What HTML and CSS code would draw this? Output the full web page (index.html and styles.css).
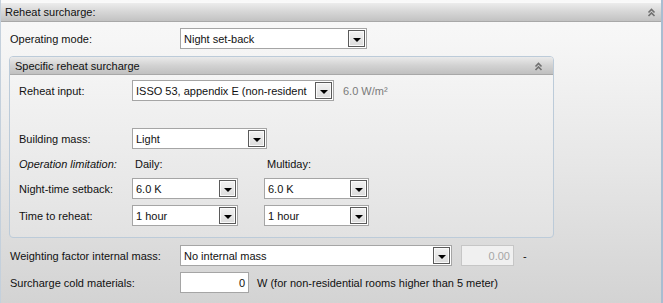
FILE: index.html
```html
<!DOCTYPE html>
<html>
<head>
<meta charset="utf-8">
<link rel="stylesheet" href="styles.css">
</head>
<body>
<div class="page">
  <div class="hdr">
    <span>Reheat surcharge:</span>
    <svg class="chev" width="9" height="9" viewBox="0 0 9 9"><polyline points="1.5,4.5 4.5,1.5 7.5,4.5" fill="none" stroke="#707070" stroke-width="1.6"/><polyline points="1.5,8 4.5,5 7.5,8" fill="none" stroke="#707070" stroke-width="1.6"/></svg>
  </div>

  <div class="row r-op">
    <div class="lbl w170">Operating mode:</div>
    <div class="sel w186"><span class="val">Night set-back</span><span class="btn"><i></i></span></div>
  </div>

  <div class="group">
    <div class="ghdr">
      <span>Specific reheat surcharge</span>
      <svg class="chev" width="9" height="9" viewBox="0 0 9 9"><polyline points="1.5,4.5 4.5,1.5 7.5,4.5" fill="none" stroke="#707070" stroke-width="1.6"/><polyline points="1.5,8 4.5,5 7.5,8" fill="none" stroke="#707070" stroke-width="1.6"/></svg>
    </div>
    <div class="gbody">
      <div class="row r-reheat">
        <div class="lbl w113">Reheat input:</div>
        <div class="sel w201"><span class="val">ISSO 53, appendix E (non-resident</span><span class="btn"><i></i></span></div>
        <span class="unit">6.0 W/m²</span>
      </div>
      <div class="row r-mass">
        <div class="lbl w113">Building mass:</div>
        <div class="sel w134"><span class="val">Light</span><span class="btn"><i></i></span></div>
      </div>
      <div class="row r-oplim">
        <div class="lbl w113 it">Operation limitation:</div>
        <div class="colhd w132">Daily:</div>
        <div class="colhd">Multiday:</div>
      </div>
      <div class="row r-night">
        <div class="lbl w113">Night-time setback:</div>
        <div class="sel w105"><span class="val">6.0 K</span><span class="btn"><i></i></span></div>
        <div class="sel w104 ml27"><span class="val">6.0 K</span><span class="btn"><i></i></span></div>
      </div>
      <div class="row r-time">
        <div class="lbl w113">Time to reheat:</div>
        <div class="sel w105"><span class="val">1 hour</span><span class="btn"><i></i></span></div>
        <div class="sel w104 ml27"><span class="val">1 hour</span><span class="btn"><i></i></span></div>
      </div>
    </div>
  </div>

  <div class="row r-weight">
    <div class="lbl w170">Weighting factor internal mass:</div>
    <div class="sel w271"><span class="val">No internal mass</span><span class="btn"><i></i></span></div>
    <div class="tb dis w52">0.00</div>
    <span class="dash">-</span>
  </div>
  <div class="row r-cold">
    <div class="lbl w170">Surcharge cold materials:</div>
    <div class="tb w68">0</div>
    <span class="note">W (for non-residential rooms higher than 5 meter)</span>
  </div>
</div>
</body>
</html>
```

FILE: styles.css
```css
* { box-sizing: border-box; }
html, body { margin: 0; padding: 0; }
body {
  width: 663px;
  height: 303px;
  overflow: hidden;
  font-family: "Liberation Sans", Arial, sans-serif;
  font-size: 11px;
  color: #111;
}
.page {
  width: 663px;
  height: 303px;
  padding-top: 2px;
  border-left: 1px solid #c4d0dc;
  border-right: 2px solid #a9bdd1;
  background: linear-gradient(#f9f9f9 0px, #f6f6f6 40px, #e6e6e6 170px, #d3d3d3 303px);
}
.hdr {
  height: 20px;
  display: flex;
  align-items: center;
  justify-content: space-between;
  padding: 0 5px 0 4px;
  border-top: 1px solid #fafafa;
  border-bottom: 1px solid #a8a8a8;
  background: linear-gradient(#ececec, #d6d6d6 50%, #c2c2c2);
  color: #111;
}
.chev { display: block; margin-top: 1px; }
.row { display: flex; align-items: center; height: 21px; }
.lbl { flex: none; white-space: nowrap; }
.it { font-style: italic; }
.w170 { width: 170px; }
.w113 { width: 113px; }
.r-op { margin-top: 6px; padding-left: 9px; }
.sel {
  flex: none;
  height: 21px;
  border: 1px solid #a5a5a5;
  background: #fff;
  display: flex;
  align-items: center;
  padding: 1px;
  padding-left: 3px;
}
.sel .val {
  flex: 1;
  min-width: 0;
  overflow: hidden;
  white-space: nowrap;
  color: #111;
}
.btn {
  flex: none;
  width: 17px;
  height: 17px;
  border: 1px solid #5a5a5a;
  background: linear-gradient(#f2f2f2, #dcdcdc);
  box-shadow: inset 0 0 0 1px #fafafa;
  display: flex;
  align-items: center;
  justify-content: center;
}
.btn i {
  display: block;
  width: 0; height: 0;
  margin-top: 2px;
  border-left: 4px solid transparent;
  border-right: 4px solid transparent;
  border-top: 4px solid #000;
}
.w186 { width: 187px; }
.w201 { width: 202px; }
.w134 { width: 135px; }
.w105 { width: 106px; }
.w104 { width: 105px; }
.w271 { width: 272px; }
.w52 { width: 53px; }
.w68 { width: 69px; }
.ml27 { margin-left: 26px; }

.group {
  margin: 7px 0 0 8px;
  width: 545px;
  height: 182px;
  border: 1px solid #bccbd9;
  border-radius: 4px;
  background: linear-gradient(#f6f6f6, #e2e2e2);
}
.ghdr {
  height: 18px;
  display: flex;
  align-items: center;
  justify-content: space-between;
  padding: 0 10px 0 5px;
  border-radius: 3px 3px 0 0;
  border-bottom: 1px solid #a8a8a8;
  background: linear-gradient(#eaeaea, #d2d2d2 50%, #c0c0c0);
}
.gbody { padding-left: 9px; }
.r-reheat { margin-top: 5px; }
.unit { margin-left: 9px; color: #7a7a7a; }
.r-mass { margin-top: 27px; }
.r-oplim { margin-top: 8px; height: 13px; }
.colhd { padding-left: 3px; }
.colhd.w132 { width: 132px; }
.r-night { margin-top: 8px; }
.r-time { margin-top: 6px; }

.r-weight { margin-top: 7px; padding-left: 9px; }
.r-cold { margin-top: 6px; padding-left: 9px; }
.tb {
  flex: none;
  height: 21px;
  border: 1px solid #a5a5a5;
  background: #fff;
  text-align: right;
  padding: 3px 3px 0 0;
  line-height: 14px;
}
.tb.dis {
  margin-left: 9px;
  background: #f0f0f0;
  border-color: #c6c6c6;
  color: #a6a6a6;
}
.dash { margin-left: 9px; }
.note { margin-left: 8px; }
```
